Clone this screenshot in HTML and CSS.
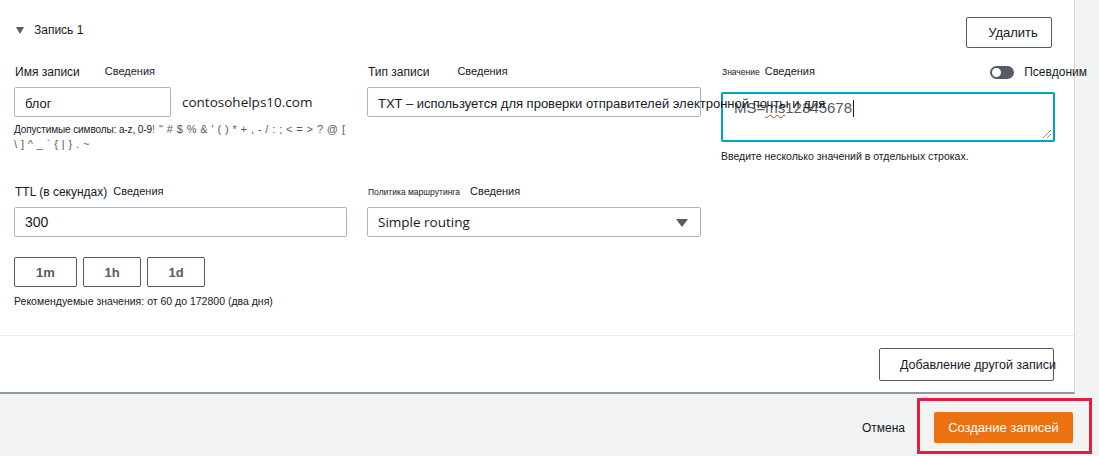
FILE: index.html
```html
<!DOCTYPE html>
<html lang="ru">
<head>
<meta charset="utf-8">
<link rel="stylesheet" href="styles.css">
</head>
<body>
<div class="page">
  <div class="panel">
    <div class="record">
      <div class="header">
        <div class="title"><span class="caret"></span>Запись 1</div>
        <button class="btn delete">Удалить</button>
      </div>

      <div class="row row1">
        <div class="col">
          <div class="labels"><span class="lbl">Имя записи</span><span class="info info-name">Сведения</span></div>
          <div class="name-line">
            <div class="field name-field low">блог</div>
            <span class="domain">contosohelps10.com</span>
          </div>
          <div class="help help-chars"><span class="dark">Допустимые символы: a-z, 0-9</span>! " # $ % &amp; ' ( ) * + , - / : ; &lt; = &gt; ? @ [<br>\ ] ^ _ ` { | } . ~</div>
        </div>
        <div class="col">
          <div class="labels"><span class="lbl">Тип записи</span><span class="info info-type">Сведения</span></div>
          <div class="field type-field low"><span class="overflow">TXT – используется для проверки отправителей электронной почты и для</span></div>
        </div>
        <div class="col">
          <div class="labels value-labels">
            <span class="lbl tiny">Значение</span><span class="info info-value">Сведения</span>
            <span class="alias"><span class="toggle"><span class="knob"></span></span>Псевдоним</span>
          </div>
          <div class="textarea">MS=<span class="spell">ms</span>12345678<span class="cursor"></span><span class="grip"></span></div>
          <div class="help hint">Введите несколько значений в отдельных строках.</div>
        </div>
      </div>

      <div class="row row2">
        <div class="col">
          <div class="labels"><span class="lbl">TTL (в секундах)</span><span class="info info-ttl">Сведения</span></div>
          <div class="field ttl-field">300</div>
          <div class="presets">
            <button class="btn preset p1">1m</button>
            <button class="btn preset">1h</button>
            <button class="btn preset">1d</button>
          </div>
          <div class="help rec">Рекомендуемые значения: от 60 до 172800 (два дня)</div>
        </div>
        <div class="col">
          <div class="labels"><span class="lbl micro">Политика маршрутинга</span><span class="info info-policy">Сведения</span></div>
          <div class="field select-field">Simple routing<span class="arrow"></span></div>
        </div>
        <div class="col"></div>
      </div>
    </div>
    <div class="add-row">
      <button class="btn add">Добавление другой записи</button>
    </div>
  </div>
  <div class="footer">
    <span class="cancel">Отмена</span>
    <span class="create-wrap"><button class="create">Создание записей</button></span>
  </div>
</div>
</body>
</html>
```
FILE: styles.css
```css
* { box-sizing: border-box; }
html, body { margin: 0; padding: 0; }
body {
  background: #f2f3f3;
  font-family: "Liberation Sans", Arial, sans-serif;
  color: #16191f;
  width: 1099px;
  height: 456px;
  overflow: hidden;
}
.page { width: 1099px; }
.panel {
  width: 1075px;
  background: #fff;
  border-right: 1px solid #d5dbdb;
  border-bottom: 2px solid #8d9a9b;
}
.record {
  border-bottom: 1px solid #eaeded;
  height: 336px;
}
.header {
  display: flex;
  justify-content: space-between;
  align-items: flex-start;
  padding: 17px 22px 0 16px;
  height: 48px;
}
.title {
  display: flex;
  align-items: center;
  font-size: 12px;
  margin-top: 6px;
}
.caret {
  width: 0; height: 0;
  border-left: 4.5px solid transparent;
  border-right: 4.5px solid transparent;
  border-top: 7px solid #545b64;
  margin-right: 10px;
}
.btn {
  font-family: "Liberation Sans", Arial, sans-serif;
  background: #fff;
  border: 1px solid #545b64;
  border-radius: 2px;
  color: #16191f;
  padding: 0;
  cursor: pointer;
}
.delete {
  width: 86px;
  height: 31px;
  font-size: 13px;
  padding-left: 8px;
}
.row {
  display: grid;
  grid-template-columns: 333px 334px 334px;
  column-gap: 20px;
  padding-left: 14px;
}
.row1 { margin-top: 17px; height: 120px; }
.row2 { margin-top: 0; }
.labels {
  height: 22px;
  display: flex;
  align-items: flex-start;
  font-size: 12px;
  line-height: 14px;
  position: relative;
}
.lbl { margin-left: 1px; }
.info { font-size: 11px; margin-top: -1px; }
.info-name { margin-left: 25px; }
.info-type { margin-left: 28px; }
.info-value { margin-left: 5px; }
.info-ttl { margin-left: 6px; }
.info-policy { margin-left: 10px; }
.tiny { font-size: 8.5px; }
.micro { font-size: 8.5px; }
.alias {
  position: absolute;
  right: -32px;
  top: 0;
  display: flex;
  align-items: center;
  font-size: 12px;
  height: 14px;
}
.toggle {
  width: 24px;
  height: 13px;
  border-radius: 7px;
  background: #545b64;
  margin-right: 10px;
  position: relative;
}
.knob {
  position: absolute;
  left: 2px; top: 2px;
  width: 9px; height: 9px;
  border-radius: 50%;
  background: #fff;
}
.field {
  height: 30px;
  border: 1px solid #aab7b8;
  border-radius: 2px;
  display: flex;
  align-items: center;
  padding-left: 10px;
  font-size: 13px;
  font-family: "Open Sans", "Noto Sans", sans-serif;
  background: #fff;
}
.low { padding-top: 3px; }
.name-line { display: flex; align-items: center; }
.name-field { width: 157px; font-family: "Liberation Sans", Arial, sans-serif; }
.domain {
  font-family: "Open Sans", "Noto Sans", sans-serif;
  font-size: 13.5px;
  margin-left: 11px;
  color: #16191f;
}
.help { font-size: 10px; color: #16191f; }
.help-chars {
  margin-top: 5px;
  line-height: 15px;
  color: #545b64;
  font-size: 11px;
  letter-spacing: 0.4px;
}
.help-chars .dark { color: #16191f; font-size: 10px; letter-spacing: -0.1px; }
.type-field {
  width: 334px;
  overflow: visible;
  white-space: nowrap;
  position: relative;
  z-index: 2;
  font-family: "Liberation Sans", Arial, sans-serif;
  font-size: 13px;
}
.overflow { position: relative; z-index: 3; }
.textarea {
  margin-top: 5px;
  width: 334px;
  height: 50px;
  border: 2px solid #00a1c9;
  border-radius: 2px;
  padding: 5px 0 0 11px;
  font-family: "Liberation Sans", Arial, sans-serif;
  font-size: 15px;
  color: #545b64;
  position: relative;
  line-height: 18px;
}
.spell { text-decoration: underline wavy #d13212; text-decoration-thickness: 1px; }
.cursor {
  display: inline-block;
  width: 1px;
  height: 17px;
  background: #16191f;
  vertical-align: -4px;
  margin-left: 1px;
}
.grip {
  position: absolute;
  right: 2px; bottom: 2px;
  width: 8px; height: 8px;
  background: linear-gradient(135deg, transparent 45%, #8d9a9b 45%, #8d9a9b 52%, transparent 52%, transparent 70%, #8d9a9b 70%, #8d9a9b 77%, transparent 77%);
}
.hint { margin-top: 7px; line-height: 14px; font-size: 10.5px; }
.ttl-field { width: 333px; font-family: "Liberation Sans", Arial, sans-serif; font-size: 14px; }
.select-field {
  width: 334px;
  position: relative;
  font-family: "Open Sans", "Noto Sans", sans-serif;
  font-size: 13.5px;
}
.arrow {
  position: absolute;
  right: 12px;
  top: 11px;
  width: 0; height: 0;
  border-left: 6px solid transparent;
  border-right: 6px solid transparent;
  border-top: 8px solid #545b64;
}
.presets { display: flex; gap: 6px; margin-top: 20px; }
.preset {
  width: 58px;
  height: 30px;
  font-weight: bold;
  font-size: 13px;
  color: #545b64;
}
.preset.p1 { width: 63px; }
.rec { margin-top: 7px; line-height: 14px; font-size: 10.5px; }
.add-row {
  display: flex;
  justify-content: flex-end;
  padding: 12px 20px 11px 0;
}
.add {
  width: 175px;
  height: 33px;
  font-size: 12.5px;
  padding-left: 20px;
  white-space: nowrap;
  text-align: left;
}
.footer {
  display: flex;
  justify-content: flex-end;
  align-items: center;
  padding: 18px 26px 0 0;
}
.cancel { font-size: 12px; margin-right: 29px; }
.create-wrap { position: relative; display: inline-flex; }
.create-wrap::after {
  content: "";
  position: absolute;
  top: -14px; left: -17px; right: -19px; bottom: -11px;
  border: 3px solid #e61e3c;
  pointer-events: none;
}
.create {
  width: 139px;
  height: 31px;
  background: #ec7211;
  color: #fff;
  border: none;
  border-radius: 2px;
  font-family: "Liberation Sans", Arial, sans-serif;
  font-size: 13px;
  padding: 0;
}
```
